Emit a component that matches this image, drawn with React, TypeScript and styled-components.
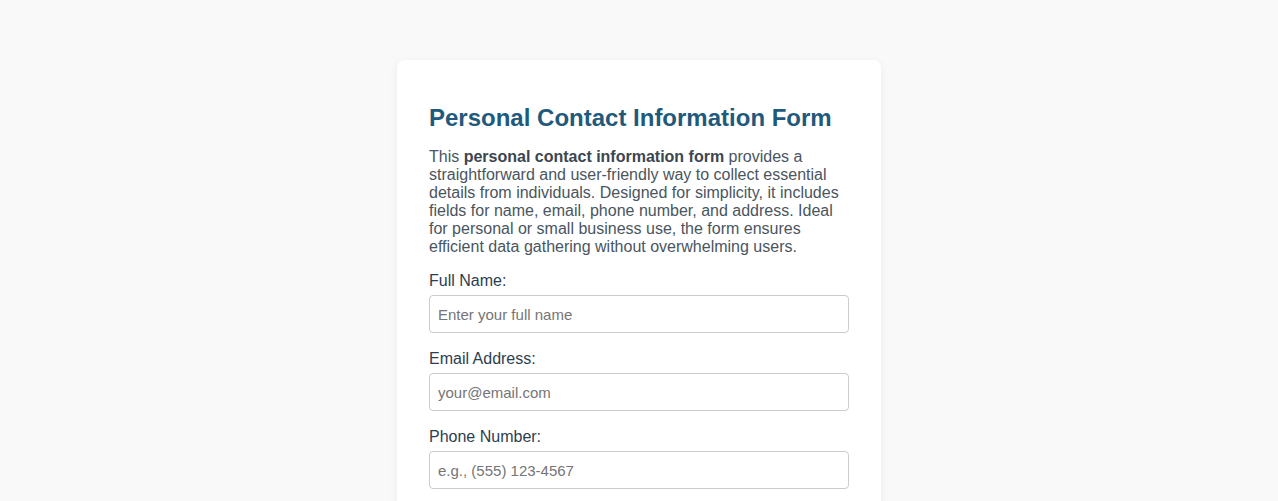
import React from "react";
import styled, { createGlobalStyle } from "styled-components";

const GlobalStyle = createGlobalStyle`
  html, body {
    margin: 0;
    padding: 0;
    background: #f9f9f9;
    font-family: "Liberation Sans", Arial, sans-serif;
  }
`;

const fields = [
  { id: "fullName", label: "Full Name:", type: "text", placeholder: "Enter your full name" },
  { id: "email", label: "Email Address:", type: "email", placeholder: "your@email.com" },
  { id: "phone", label: "Phone Number:", type: "tel", placeholder: "e.g., (555) 123-4567" },
];

const App = () => {
  return (
    <>
      <GlobalStyle />
      <Page>
        <Card>
          <Title>Personal Contact Information Form</Title>
          <Intro>
            This <strong>personal contact information form</strong> provides a
            straightforward and user-friendly way to collect essential details
            from individuals. Designed for simplicity, it includes fields for
            name, email, phone number, and address. Ideal for personal or small
            business use, the form ensures efficient data gathering without
            overwhelming users.
          </Intro>
          <Form onSubmit={(e) => e.preventDefault()}>
            {fields.map((f) => (
              <Field key={f.id}>
                <Label htmlFor={f.id}>{f.label}</Label>
                <Input id={f.id} type={f.type} placeholder={f.placeholder} />
              </Field>
            ))}
          </Form>
        </Card>
      </Page>
    </>
  );
};

export default App;

const Page = styled.div`
  display: flex;
  justify-content: center;
  padding-top: 60px;
  min-height: 100vh;
  box-sizing: border-box;
`;

const Card = styled.div`
  width: 484px;
  box-sizing: border-box;
  background: #ffffff;
  border-radius: 8px;
  box-shadow: 0 2px 10px rgba(0, 0, 0, 0.06);
  padding: 32px;
`;

const Title = styled.h1`
  margin: 12px 0 16px;
  font-size: 24px;
  font-weight: bold;
  color: #1f5a7c;
`;

const Intro = styled.p`
  margin: 0 0 16px;
  font-size: 16px;
  line-height: 18px;
  color: #4a5560;

  strong {
    color: #3b4650;
  }
`;

const Form = styled.form`
  display: flex;
  flex-direction: column;
  gap: 17px;
`;

const Field = styled.div`
  display: flex;
  flex-direction: column;
  gap: 5px;
`;

const Label = styled.label`
  font-size: 16px;
  line-height: 18px;
  color: #2c3e50;
`;

const Input = styled.input`
  height: 38px;
  box-sizing: border-box;
  padding: 0 8px;
  border: 1px solid #cccccc;
  border-radius: 4px;
  font-family: "Liberation Sans", Arial, sans-serif;
  font-size: 15px;
  color: #333;

  &::placeholder {
    color: #757575;
  }
`;
